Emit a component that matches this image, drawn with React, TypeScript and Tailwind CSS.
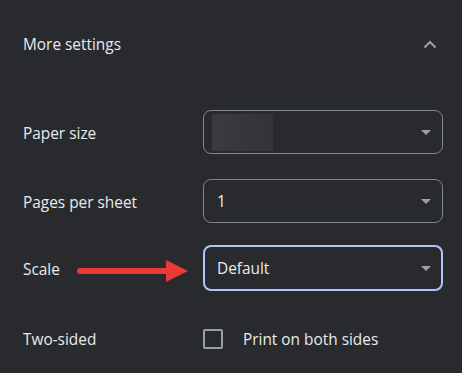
export default function App() {
  const caret = (
    <svg className="w-[10px] h-[5px] shrink-0" viewBox="0 0 10 5">
      <path d="M0 0h10L5 5z" fill="#9aa0a6" />
    </svg>
  )

  return (
    <div
      className="w-[462px] h-[373px] bg-[#292a2d] text-[#e8eaed] text-[15.4px] overflow-hidden"
      style={{ fontFamily: '"Segoe UI", "Open Sans", "Noto Sans", sans-serif' }}
    >
      <div className="pl-[23px] pr-[19px] pt-[24px]">
        {/* Header */}
        <div className="flex items-center justify-between h-[40px]">
          <span className="pt-[2px]">More settings</span>
          <svg className="w-[14px] h-[9px] mr-[6px]" viewBox="0 0 14 9">
            <path d="M1.5 7.5L7 2l5.5 5.5" fill="none" stroke="#9aa0a6" strokeWidth="2" />
          </svg>
        </div>

        {/* Paper size */}
        <div className="flex items-center mt-[46px]">
          <span className="w-[180px] pt-[3px]">Paper size</span>
          <div className="w-[240px] h-[44px] rounded-[8px] border border-[#80868b] flex items-center justify-between pl-[8px] pr-[11px]">
            <div className="w-[61px] h-[37px] bg-gradient-to-r from-[#3a3b3e] to-[#333437]" />
            {caret}
          </div>
        </div>

        {/* Pages per sheet */}
        <div className="flex items-center mt-[25px]">
          <span className="w-[180px] pt-[3px]">Pages per sheet</span>
          <div className="w-[240px] h-[44px] rounded-[8px] border border-[#80868b] flex items-center justify-between pl-[13px] pr-[11px]">
            <span className="pt-[2px]">1</span>
            {caret}
          </div>
        </div>

        {/* Scale */}
        <div className="flex items-center mt-[22px] relative">
          <span className="w-[180px] pt-[3px]">Scale</span>
          <div className="w-[240px] h-[46px] rounded-[8px] border-2 border-[#a8c7fa] flex items-center justify-between pl-[12px] pr-[10px]">
            <span className="pt-[2px]">Default</span>
            {caret}
          </div>
          <svg className="absolute left-[54px] top-[14px] w-[112px] h-[24px]" viewBox="0 0 112 24">
            <path d="M3 9h86V1l22 11-22 11v-8H3a3 3 0 010-6z" fill="#e93a36" />
          </svg>
        </div>

        {/* Two-sided */}
        <div className="flex items-center mt-[35px]">
          <span className="w-[180px] pt-[2px]">Two-sided</span>
          <div className="w-[20px] h-[20px] rounded-[2px] border-2 border-[#9aa0a6]" />
          <span className="ml-[20px] pt-[2px]">Print on both sides</span>
        </div>
      </div>
    </div>
  )
}
